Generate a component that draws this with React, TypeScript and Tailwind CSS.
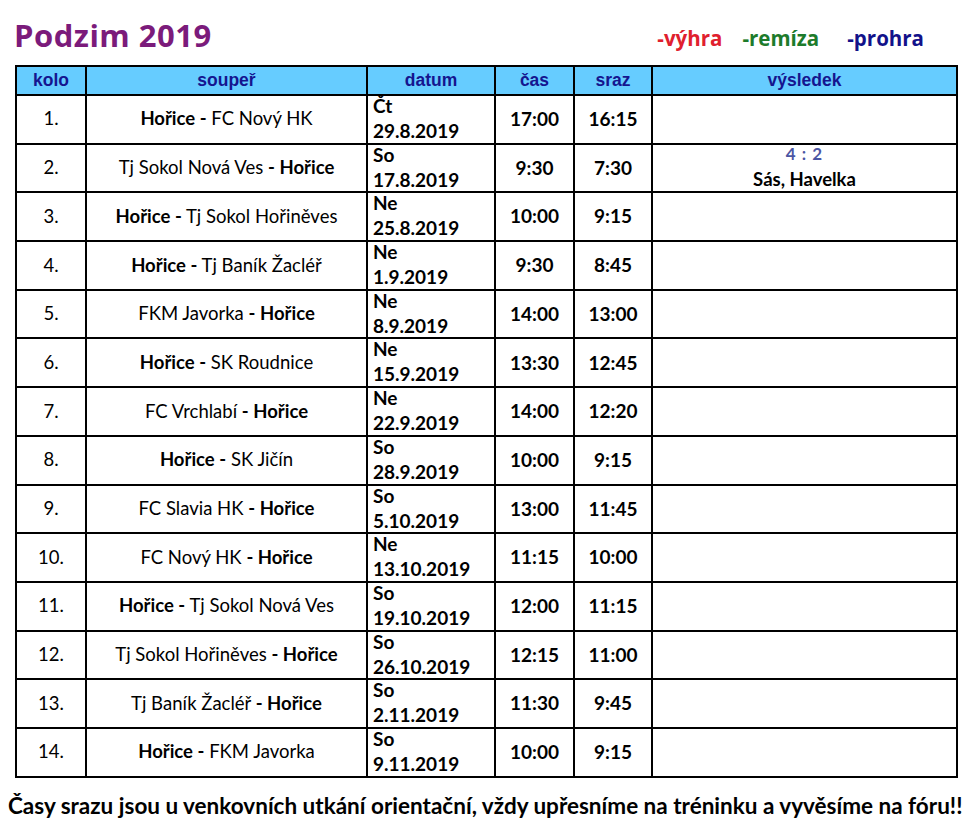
const rows = [
    { home: true, opp: 'FC Nový HK', day: 'Čt', date: '29.8.2019', time: '17:00', meet: '16:15' },
    { home: false, opp: 'Tj Sokol Nová Ves', day: 'So', date: '17.8.2019', time: '9:30', meet: '7:30', score: '4 : 2', scorers: 'Sás, Havelka' },
    { home: true, opp: 'Tj Sokol Hořiněves', day: 'Ne', date: '25.8.2019', time: '10:00', meet: '9:15' },
    { home: true, opp: 'Tj Baník Žacléř', day: 'Ne', date: '1.9.2019', time: '9:30', meet: '8:45' },
    { home: false, opp: 'FKM Javorka', day: 'Ne', date: '8.9.2019', time: '14:00', meet: '13:00' },
    { home: true, opp: 'SK Roudnice', day: 'Ne', date: '15.9.2019', time: '13:30', meet: '12:45' },
    { home: false, opp: 'FC Vrchlabí', day: 'Ne', date: '22.9.2019', time: '14:00', meet: '12:20' },
    { home: true, opp: 'SK Jičín', day: 'So', date: '28.9.2019', time: '10:00', meet: '9:15' },
    { home: false, opp: 'FC Slavia HK', day: 'So', date: '5.10.2019', time: '13:00', meet: '11:45' },
    { home: false, opp: 'FC Nový HK', day: 'Ne', date: '13.10.2019', time: '11:15', meet: '10:00' },
    { home: true, opp: 'Tj Sokol Nová Ves', day: 'So', date: '19.10.2019', time: '12:00', meet: '11:15' },
    { home: false, opp: 'Tj Sokol Hořiněves', day: 'So', date: '26.10.2019', time: '12:15', meet: '11:00' },
    { home: false, opp: 'Tj Baník Žacléř', day: 'So', date: '2.11.2019', time: '11:30', meet: '9:45' },
    { home: true, opp: 'FKM Javorka', day: 'So', date: '9.11.2019', time: '10:00', meet: '9:15' },
]

const cell = 'border-2 border-black p-0'

export default function App() {
    return (
        <div className="w-[976px] h-[832px] bg-white overflow-hidden font-['Lato','Liberation_Sans',sans-serif] text-black">
            <div className="flex items-end h-[65px] pl-[14px] pr-[52px] pb-[14px]">
                <h1 className="font-['Open_Sans',sans-serif] font-bold text-[31px] leading-none text-[#7b1b7b] tracking-[0.5px]">
                    Podzim 2019
                </h1>
                <div className="ml-auto flex gap-[20px] pb-[3px] font-['Open_Sans',sans-serif] font-bold text-[20.5px] leading-none">
                    <span className="text-[#e0202e]">-výhra</span>
                    <span className="text-[#1d7b2b] mr-[8px]">-remíza</span>
                    <span className="text-[#12128a]">-prohra</span>
                </div>
            </div>

            <table className="ml-[15px] w-[941px] border-collapse table-fixed">
                <colgroup>
                    <col className="w-[70px]" />
                    <col className="w-[281px]" />
                    <col className="w-[128px]" />
                    <col className="w-[79px]" />
                    <col className="w-[78px]" />
                    <col className="w-[305px]" />
                </colgroup>
                <thead>
                    <tr className="h-[29px] bg-[#66ccff] text-[#15158f] font-['Liberation_Sans',sans-serif] font-bold text-[17.5px]">
                        <th className={cell}>kolo</th>
                        <th className={cell}>soupeř</th>
                        <th className={cell}>datum</th>
                        <th className={cell}>čas</th>
                        <th className={cell}>sraz</th>
                        <th className={cell}>výsledek</th>
                    </tr>
                </thead>
                <tbody className="text-[18.5px]">
                    {rows.map((r, i) => (
                        <tr key={i} className="h-[48.7px]">
                            <td className={cell + ' text-center'}>{i + 1}.</td>
                            <td className={cell + ' text-center'}>
                                {r.home ? (
                                    <>
                                        <b>Hořice -</b> {r.opp}
                                    </>
                                ) : (
                                    <>
                                        {r.opp} <b>- Hořice</b>
                                    </>
                                )}
                            </td>
                            <td className={cell + ' font-bold align-top pl-[5px] text-[19px] leading-[20px]'}>
                                <div className="h-[45px] flex flex-col justify-between">
                                    <div>{r.day}</div>
                                    <div>{r.date}</div>
                                </div>
                            </td>
                            <td className={cell + ' text-center font-bold text-[19px]'}>{r.time}</td>
                            <td className={cell + ' text-center font-bold text-[19px]'}>{r.meet}</td>
                            <td className={cell + ' text-center font-bold align-top'}>
                                {r.score && (
                                    <div className="h-[45px] flex flex-col justify-between">
                                        <div className="text-[#4b55a3] text-[17px] leading-[18px] tracking-[1px]">{r.score}</div>
                                        <div className="leading-[22px]">{r.scorers}</div>
                                    </div>
                                )}
                            </td>
                        </tr>
                    ))}
                </tbody>
            </table>

            <p className="mt-[17px] pl-[8px] font-bold text-[22.5px] leading-none whitespace-nowrap">
                Časy srazu jsou u venkovních utkání orientační, vždy upřesníme na tréninku a vyvěsíme na fóru!!
            </p>
        </div>
    )
}
